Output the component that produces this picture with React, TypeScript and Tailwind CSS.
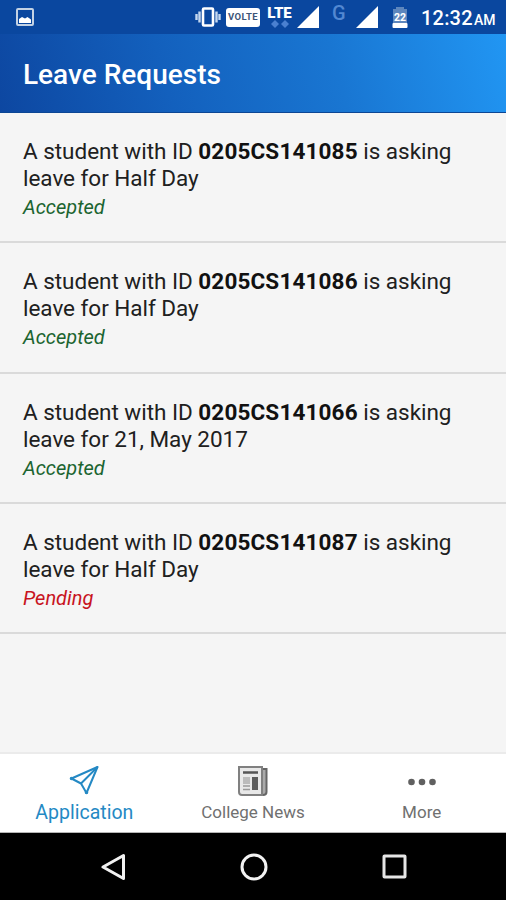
import { ReactNode } from "react";

type Leave = { id: string; duration: string; status: "Accepted" | "Pending" };

const leaves: Leave[] = [
    { id: "0205CS141085", duration: "Half Day", status: "Accepted" },
    { id: "0205CS141086", duration: "Half Day", status: "Accepted" },
    { id: "0205CS141066", duration: "21, May 2017", status: "Accepted" },
    { id: "0205CS141087", duration: "Half Day", status: "Pending" },
];

function Signal() {
    return (
        <svg width="22" height="22" viewBox="0 0 22 22" className="shrink-0">
            <path d="M22 0V22H0Z" fill="#fff" />
        </svg>
    );
}

function StatusBar() {
    return (
        <div className="flex h-[34px] shrink-0 items-start bg-[#0a479f] pl-4 text-white">
            <svg width="18" height="18" viewBox="0 0 18 18" className="mt-2 shrink-0">
                <rect x="1" y="1" width="16" height="16" rx="1" fill="none" stroke="#c3d2e4" strokeWidth="2" />
                <path d="M3 15v-4l3-2 3 1.500 2.500-1.500 3.500 2.500V15z" fill="#fff" />
            </svg>

            {/* Vibrate */}
            <svg width="26" height="20" viewBox="0 0 26 20" className="ml-[161px] mt-[7px] shrink-0">
                <path d="M1.500 7v6M4.500 4.500v11M21.500 4.500v11M24.500 7v6" stroke="#c5d8f0" strokeWidth="2.400" />
                <rect x="8" y="1.500" width="10" height="17" rx="1" fill="none" stroke="#fff" strokeWidth="2.600" />
            </svg>

            <div className="ml-[5px] mt-2 flex h-[19px] w-[34px] shrink-0 items-center justify-center rounded-[3px] bg-white text-[9.5px] font-bold tracking-[0.4px] text-[#3c5578]">
                VOLTE
            </div>

            {/* LTE with data arrows */}
            <div className="ml-[7px] mt-[6px] flex w-[25px] shrink-0 flex-col items-center">
                <span className="text-[15px] leading-[14px] font-black">LTE</span>
                <svg width="18" height="8" viewBox="0 0 18 8" fill="#4a80d0">
                    <path d="M4 0l4 4-4 4-4-4z" />
                    <path d="M14 0l4 4-4 4-4-4z" />
                </svg>
            </div>

            <div className="ml-[5px] mt-[6px] flex">
                <Signal />
            </div>
            <span className="ml-[13px] mt-[2px] w-[14px] text-[20px] leading-[22px] font-medium text-[#5288d2]">G</span>
            <div className="ml-[10px] mt-[6px] flex">
                <Signal />
            </div>

            <svg width="16" height="21" viewBox="0 0 16 21" className="ml-[14px] mt-[7px] shrink-0">
                <path d="M4 0h8v2h3v14H1V2h3z" fill="#5d86bd" />
                <rect x="0.500" y="16" width="15" height="5" rx="1" fill="#fff" />
                <text x="8" y="14" textAnchor="middle" fontSize="10.5" fontWeight="800" fill="#fff">22</text>
            </svg>

            <div className="ml-[13px] mt-[6px] flex items-baseline leading-6 whitespace-nowrap">
                <span className="w-[53px] text-[20px] font-medium tracking-[0.2px]">12:32</span>
                <span className="text-[14px] font-medium">AM</span>
            </div>
        </div>
    );
}

function LeaveRow({ leave }: { leave: Leave }) {
    return (
        <li className="h-[130.3px] shrink-0 border-b-2 border-[#dadada] pt-[25px] pl-[23px] text-[22.5px] leading-[27px] text-[#202020]">
            <p className="w-[460px] tracking-[-0.03px]">
                A student with ID <b className="font-bold tracking-[0.15px] text-[#111]">{leave.id}</b> is asking
                <br />
                leave for {leave.duration}
            </p>
            <p
                className={`mt-[3px] text-[20px] leading-[25px] italic ${
                    leave.status === "Accepted" ? "text-[#1b6430]" : "text-[#c8141e]"
                }`}
            >
                {leave.status}
            </p>
        </li>
    );
}

function Tab({ icon, label, active }: { icon: ReactNode; label: string; active?: boolean }) {
    return (
        <button
            className={`flex flex-1 flex-col items-center pt-[11px] ${
                active ? "text-[19.5px] text-[#2489c4]" : "text-[17px] text-[#707070]"
            }`}
        >
            <span className="flex h-8 items-center">{icon}</span>
            <span className={active ? "mt-1 leading-6" : "mt-[3px] leading-6"}>{label}</span>
        </button>
    );
}

export default function App() {
    return (
        <div className="flex h-[900px] w-[506px] flex-col overflow-hidden bg-[#f5f5f5] font-[Roboto,sans-serif]">
            <StatusBar />
            <header className="flex h-[79px] shrink-0 items-center border-b border-[#0c4694] bg-[linear-gradient(75deg,#0d47a1_0%,#1360bd_33%,#1976d2_66%,#2196f3_100%)] pt-[3px] pl-[23px]">
                <h1 className="text-[28px] leading-8 font-medium text-white">Leave Requests</h1>
            </header>

            <ul className="flex flex-1 flex-col">
                {leaves.map((leave) => (
                    <LeaveRow key={leave.id} leave={leave} />
                ))}
            </ul>

            {/* Bottom tabs */}
            <nav className="flex h-[81px] shrink-0 border-t-2 border-b border-t-[#ebebeb] border-b-[#b5b5b5] bg-white">
                <Tab
                    active
                    label="Application"
                    icon={
                        <svg width="30" height="30" viewBox="0 0 30 30" fill="none" stroke="#2489c4" strokeWidth="2" strokeLinejoin="round">
                            <path d="M28.500 1L2.500 12.500l9.500 5L17.500 27z" />
                            <path d="M28.500 1L12 17.500" />
                            <circle cx="2.500" cy="12.500" r="0.800" />
                            <circle cx="17.500" cy="26.500" r="0.800" />
                        </svg>
                    }
                />
                <Tab
                    label="College News"
                    icon={
                        <svg width="32" height="32" viewBox="0 0 32 32" fill="none">
                            <path d="M26 4h3.500v23q0 3-3.500 3" fill="#aaa" stroke="#666" strokeWidth="2" />
                            <path d="M2 2h23v28H5q-3 0-3-3z" fill="#e8e8e8" stroke="#808080" strokeWidth="2" />
                            <path d="M6 7.500h15" stroke="#555" strokeWidth="2.500" />
                            <path d="M6 12h7v7H6z" fill="#bbb" />
                            <path d="M15 12h6v13h-6z" fill="#5c5c5c" />
                            <path d="M6 21h7M6 24.500h7" stroke="#999" strokeWidth="1.500" />
                        </svg>
                    }
                />
                <Tab
                    label="More"
                    icon={
                        <svg width="28" height="8" viewBox="0 0 28 8" fill="#606060" className="mt-[2px]">
                            <circle cx="3.500" cy="4" r="3.300" />
                            <circle cx="14" cy="4" r="3.300" />
                            <circle cx="24.500" cy="4" r="3.300" />
                        </svg>
                    }
                />
            </nav>

            <footer className="flex h-[67px] shrink-0 items-center justify-between bg-black pr-[99px] pl-[101px]">
                <svg width="25" height="28" viewBox="0 0 25 28" fill="none" stroke="#f2f2f2" strokeWidth="3" strokeLinejoin="round">
                    <path d="M22.500 2.500v23L2 14z" />
                </svg>
                <svg width="28" height="28" viewBox="0 0 28 28" fill="none" stroke="#f2f2f2" strokeWidth="3" className="-ml-px">
                    <circle cx="14" cy="14" r="12" />
                </svg>
                <svg width="25" height="25" viewBox="0 0 25 25" fill="none" stroke="#e6e6e6" strokeWidth="3">
                    <rect x="2" y="2" width="21" height="21" rx="0.500" />
                </svg>
            </footer>
        </div>
    );
}
